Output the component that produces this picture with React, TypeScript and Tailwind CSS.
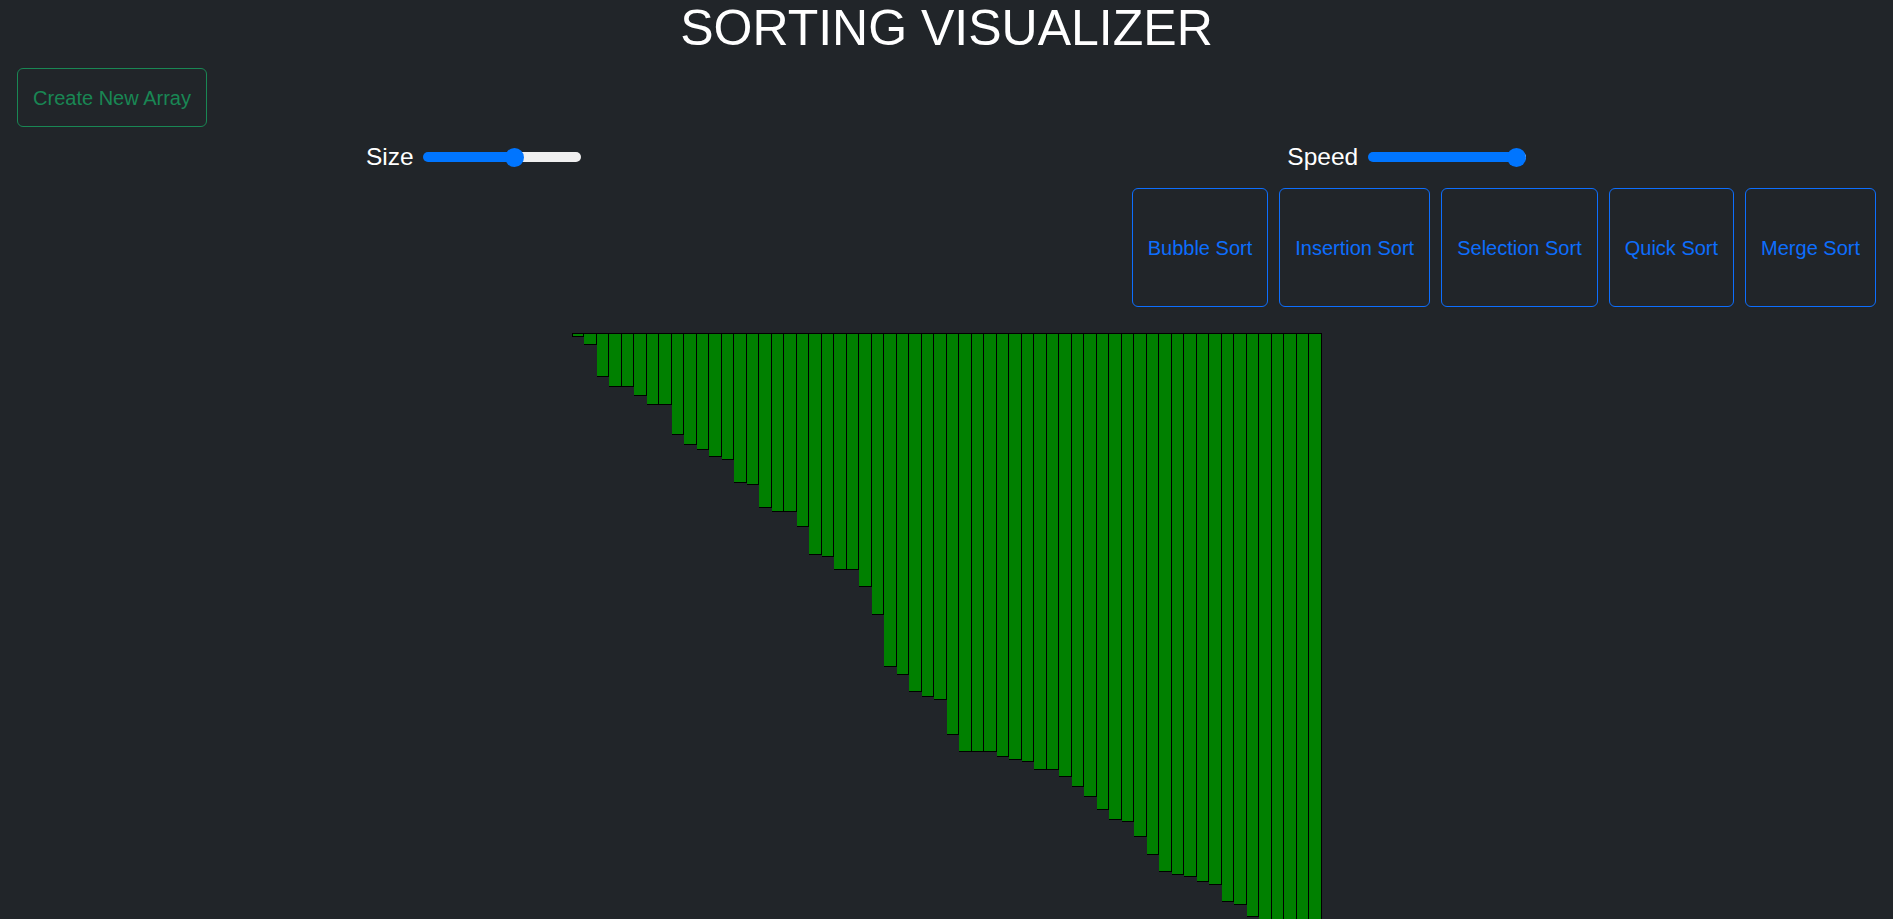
import { useState } from "react";

// bar heights in px (top aligned, grow downward)
const BARS = [
  4, 12, 44, 54, 54, 63, 72, 72, 102, 112, 117, 124, 127, 150, 152, 175, 179, 179, 194, 222,
  224, 237, 237, 254, 282, 334, 342, 359, 364, 367, 402, 419, 419, 419, 424, 427, 429, 437, 437, 444,
  454, 464, 477, 487, 489, 504, 522, 539, 542, 544, 549, 552, 569, 572, 584, 596, 604, 612, 618, 624,
];

const SORTS = ["Bubble Sort", "Insertion Sort", "Selection Sort", "Quick Sort", "Merge Sort"];

const Slider = ({ value, onChange }: { value: number; onChange: (v: number) => void }) => (
  <input
    type="range"
    min={0}
    max={100}
    value={value}
    onChange={(e) => onChange(Number(e.target.value))}
    className="appearance-none w-[158px] h-[10px] rounded-full outline-none cursor-pointer [&::-webkit-slider-thumb]:appearance-none [&::-webkit-slider-thumb]:w-[19px] [&::-webkit-slider-thumb]:h-[19px] [&::-webkit-slider-thumb]:rounded-full [&::-webkit-slider-thumb]:bg-[#0075ff] [&::-webkit-slider-thumb]:border-0"
    style={{
      background: `linear-gradient(to right, #0075ff 0%, #0075ff ${6 + value * 0.88}%, #efefef ${6 + value * 0.88}%, #efefef 100%)`,
    }}
  />
);

export default function App() {
  const [size, setSize] = useState(59);
  const [speed, setSpeed] = useState(100);

  return (
    <div className="h-screen overflow-hidden bg-[#212529] text-white font-['Liberation_Sans',Arial,sans-serif]">
      <h1 className="text-center text-[50px] leading-[57px] font-normal">SORTING VISUALIZER</h1>

      <div className="mt-[11px] pl-[17px]">
        <button className="h-[59px] w-[190px] rounded-[6px] border border-[#198754] text-[20px] text-[#198754]">
          Create New Array
        </button>
      </div>

      <div className="mt-[15px] grid h-[30px] grid-cols-2">
        <div className="flex items-center justify-center gap-[9px]">
          <span className="text-[24.5px] leading-none">Size</span>
          <Slider value={size} onChange={setSize} />
        </div>
        <div className="flex items-center justify-center gap-[10px] pr-[26px]">
          <span className="text-[24.5px] leading-none">Speed</span>
          <Slider value={speed} onChange={setSpeed} />
        </div>
      </div>

      <div className="mt-[16px] flex justify-end gap-[11px] pr-[17px]">
        {SORTS.map((s) => (
          <button
            key={s}
            className="h-[119px] rounded-[6px] border border-[#0d6efd] px-[15px] text-[20px] text-[#0d6efd]"
          >
            {s}
          </button>
        ))}
      </div>

      <div className="mt-[26px] flex items-start justify-center">
        {BARS.map((h, i) => (
          <div
            key={i}
            className="w-[12.5px] border-y border-r border-black bg-[#008000] first:border-l"
            style={{ height: h }}
          />
        ))}
      </div>
    </div>
  );
}
